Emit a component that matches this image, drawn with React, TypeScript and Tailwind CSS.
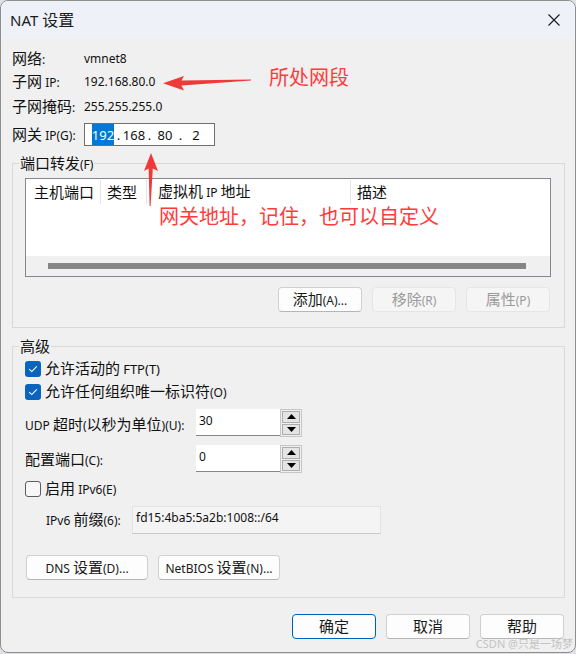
import React from "react";

function C({ children }: { children: React.ReactNode }) {
  return <span className="text-[15px] leading-[16px]">{children}</span>;
}

function Btn({
  children,
  kind = "normal",
  className = "",
}: {
  children: React.ReactNode;
  kind?: "normal" | "disabled" | "primary";
  className?: string;
}) {
  const base =
    "flex h-[25px] items-center justify-center rounded-[4px] text-[12px] leading-[16px] ";
  const k =
    kind === "disabled"
      ? "border border-[#e5e5e5] bg-[#f5f5f5] text-[#9a9a9a]"
      : kind === "primary"
      ? "border border-[#005fb8] bg-[#fdfdfd] text-[#1a1a1a]"
      : "border border-[#d0d0d0] border-b-[#b5b5b5] bg-[#fdfdfd] text-[#1a1a1a]";
  return (
    <div className={base + k + " " + className}>
      <span>{children}</span>
    </div>
  );
}

function CheckBox({ checked }: { checked: boolean }) {
  return checked ? (
    <div className="flex h-[16px] w-[16px] items-center justify-center rounded-[3px] bg-[#0a64be]">
      <svg width="10" height="8" viewBox="0 0 10 8">
        <path d="M1.2 4.2 L3.8 6.6 L8.8 1.3" stroke="white" strokeWidth="1.1" fill="none" />
      </svg>
    </div>
  ) : (
    <div className="h-[16px] w-[16px] rounded-[3px] border border-[#5d5d5d] bg-[#f7f7f7]" />
  );
}

function Spinner() {
  return (
    <div className="flex h-[28px] w-[22px] flex-col gap-[1px] border border-[#c6c6c6] bg-[#f0f0f0] p-[1px]">
      <div className="flex flex-1 items-center justify-center border border-[#adadad] bg-[#e4e4e4]">
        <svg width="9" height="5" viewBox="0 0 9 5">
          <path d="M0 5 L4.5 0 L9 5Z" fill="#000" />
        </svg>
      </div>
      <div className="flex flex-1 items-center justify-center border border-[#adadad] bg-[#e4e4e4]">
        <svg width="9" height="5" viewBox="0 0 9 5">
          <path d="M0 0 L4.5 5 L9 0Z" fill="#000" />
        </svg>
      </div>
    </div>
  );
}

export default function App() {
  return (
    <div className="h-[654px] w-[576px] bg-[#dfe3e8] font-['Noto_Sans','Noto_Sans_CJK_SC',sans-serif] text-[#111]">
      <div className="relative flex h-[653px] w-[576px] flex-col overflow-hidden rounded-[8px] border border-[#8e8e8e] bg-[#f0f0f0]">
        {/* title bar */}
        <div className="flex h-[37px] items-center justify-between bg-[#eef2f8] pl-[9px] pr-[15px]">
          <span className="text-[15px] leading-[20px] text-[#1a1a1a]">
            NAT <span className="text-[16px]">设置</span>
          </span>
          <svg width="12" height="12" viewBox="0 0 12 12">
            <path d="M0.5 0.5 L11.5 11.5 M11.5 0.5 L0.5 11.5" stroke="#1a1a1a" strokeWidth="1.1" />
          </svg>
        </div>

        {/* body */}
        <div className="flex flex-col pl-[11px] pr-[10px] text-[12px] leading-[16px]">
          <div className="mt-[11px] flex h-[20px] items-center">
            <span className="w-[72px]">
              <C>网络</C>:
            </span>
            <span>vmnet8</span>
          </div>
          <div className="mt-[3px] flex h-[20px] items-center">
            <span className="w-[72px]">
              <C>子网</C> IP:
            </span>
            <span>192.168.80.0</span>
          </div>
          <div className="mt-[5px] flex h-[20px] items-center">
            <span className="w-[72px]">
              <C>子网掩码</C>:
            </span>
            <span>255.255.255.0</span>
          </div>
          <div className="mt-[6px] flex h-[23px] items-center">
            <span className="w-[72px]">
              <C>网关</C> IP(G):
            </span>
            <div className="flex h-[23px] w-[131px] items-center border border-[#6f6f6f] bg-white pl-[5px] text-[13px]">
              <span className="flex h-[21px] w-[26px] items-center justify-center">
                <span className="flex h-[21px] items-center bg-[#0078d7] text-white">192</span>
              </span>
              <span className="w-[5px] text-center">.</span>
              <span className="w-[26px] text-center">168</span>
              <span className="w-[5px] text-center">.</span>
              <span className="w-[26px] text-center">80</span>
              <span className="w-[5px] text-center">.</span>
              <span className="w-[26px] text-center">2</span>
            </div>
          </div>

          {/* group: port forwarding */}
          <div className="relative mt-[17px] flex h-[165px] flex-col border border-[#d9d9d9] pl-[12px] pr-[13px]">
            <span className="absolute left-[6px] top-[-9px] bg-[#f0f0f0] px-[1px] leading-[16px]">
              <C>端口转发</C>(F)
            </span>
            <div className="mt-[14px] flex h-[99px] flex-col border border-[#828790] bg-white">
              <div className="flex h-[26px] items-stretch">
                <div className="my-[1px] flex w-[75px] items-center border-r border-[#e5e5e5] pl-[8px]">
                  <C>主机端口</C>
                </div>
                <div className="my-[1px] flex w-[46px] items-center border-r border-[#e5e5e5] pl-[6px]">
                  <C>类型</C>
                </div>
                <div className="my-[1px] flex w-[204px] items-center border-r border-[#e5e5e5] pl-[11px]">
                  <span>
                    <C>虚拟机</C> IP <C>地址</C>
                  </span>
                </div>
                <div className="flex items-center pl-[6px]">
                  <C>描述</C>
                </div>
              </div>
              <div className="flex-1" />
              <div className="flex h-[20px] items-start bg-[#f0f0f0] pl-[22px] pr-[24px] pt-[7px]">
                <div className="h-[6px] flex-1 bg-[#858585]" />
              </div>
            </div>
            <div className="mt-[10px] flex justify-end gap-[10px] pr-[1px]">
              <Btn className="w-[84px]">
                <C>添加</C>(A)...
              </Btn>
              <Btn kind="disabled" className="w-[84px]">
                <C>移除</C>(R)
              </Btn>
              <Btn kind="disabled" className="w-[84px]">
                <C>属性</C>(P)
              </Btn>
            </div>
          </div>

          {/* group: advanced */}
          <div className="relative mt-[18px] flex h-[252px] flex-col border border-[#d9d9d9] pl-[12px]">
            <span className="absolute left-[6px] top-[-9px] bg-[#f0f0f0] px-[1px] leading-[16px]">
              <C>高级</C>
            </span>
            <div className="mt-[14px] flex h-[16px] items-center gap-[4px]">
              <CheckBox checked />
              <span>
                <C>允许活动的</C> <span className="text-[13px]">FTP(T)</span>
              </span>
            </div>
            <div className="mt-[7px] flex h-[16px] items-center gap-[4px]">
              <CheckBox checked />
              <span>
                <C>允许任何组织唯一标识符</C>(O)
              </span>
            </div>
            <div className="mt-[9px] flex h-[28px] items-center">
              <span className="w-[171px] pt-[3px]">
                UDP <C>超时</C>(<C>以秒为单位</C>)(U):
              </span>
              <div className="h-[27px] w-[84px] self-start border-b border-[#868686] bg-white pl-[3px] pt-[4px]">30</div>
              <Spinner />
            </div>
            <div className="mt-[8px] flex h-[28px] items-center">
              <span className="w-[171px] pt-[1px]">
                <C>配置端口</C>(C):
              </span>
              <div className="h-[27px] w-[84px] self-start border-b border-[#868686] bg-white pl-[3px] pt-[4px]">0</div>
              <Spinner />
            </div>
            <div className="mt-[8px] flex h-[16px] items-center gap-[4px]">
              <CheckBox checked={false} />
              <span>
                <C>启用</C> IPv6(E)
              </span>
            </div>
            <div className="mt-[9px] flex h-[28px] items-center pl-[21px]">
              <span className="w-[86px]">
                IPv6 <C>前缀</C>(6):
              </span>
              <div className="h-[28px] w-[249px] border border-[#e3e3e3] border-b-[#c9c9c9] bg-[#f4f4f4] pl-[3px] pt-[3px]">
                fd15:4ba5:5a2b:1008::/64
              </div>
            </div>
            <div className="mt-[21px] flex gap-[10px] pl-[1px]">
              <Btn className="w-[122px]">
                DNS <C>设置</C>(D)...
              </Btn>
              <Btn className="w-[122px]">
                NetBIOS <C>设置</C>(N)...
              </Btn>
            </div>
          </div>

          {/* bottom buttons */}
          <div className="mt-[16px] flex justify-end gap-[10px] pr-[1px]">
            <Btn kind="primary" className="w-[84px]">
              <C>确定</C>
            </Btn>
            <Btn className="w-[84px]">
              <C>取消</C>
            </Btn>
            <Btn className="w-[84px]">
              <C>帮助</C>
            </Btn>
          </div>
        </div>

        {/* annotations */}
        <svg className="pointer-events-none absolute left-[-1px] top-[-1px]" width="576" height="654" viewBox="0 0 576 654">
          <polygon points="163,83.3 184,76 181.5,80.6 251,79.6 251,80.6 181.5,85.6 184,90.6" fill="#f03a3a" />
          <polygon points="151,153 158,171 152.8,168.5 150.6,206 149.6,206 148.6,168.5 144,171" fill="#f03a3a" />
        </svg>
        <span className="pointer-events-none absolute left-[268px] top-[64px] text-[20px] leading-[26px] text-[#ff3b3b]">所处网段</span>
        <span className="pointer-events-none absolute left-[158px] top-[203px] text-[20px] leading-[26px] text-[#ff3b3b]">
          网关地址，记住，也可以自定义
        </span>
        <span className="pointer-events-none absolute right-[2px] top-[635px] text-[11px] leading-[16px] text-[#c3c3c3]">
          CSDN @只是一场梦
        </span>
      </div>
    </div>
  );
}
